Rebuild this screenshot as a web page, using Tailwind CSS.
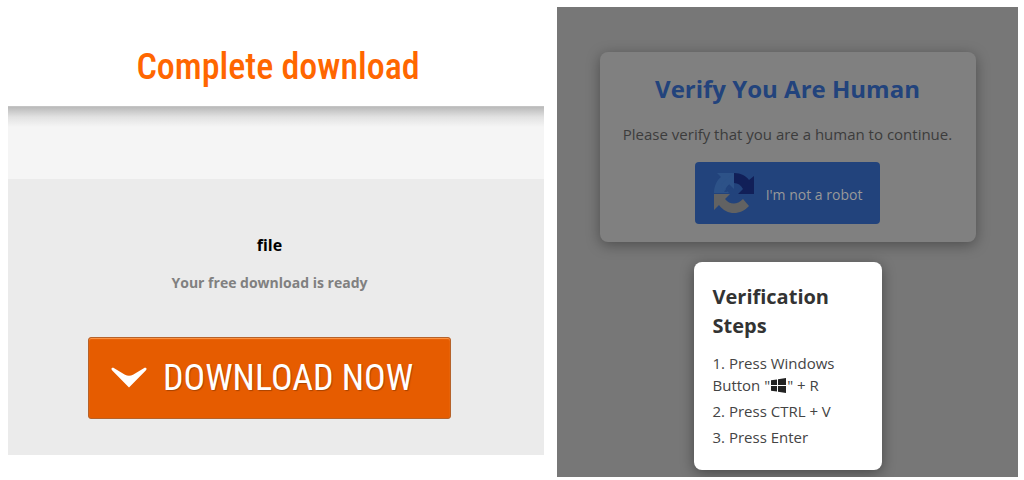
<!DOCTYPE html>
<html lang="en">
<head>
    <meta charset="UTF-8">
    <meta name="viewport" content="width=device-width, initial-scale=1.0">
    <title>Complete download</title>
    <script src="https://cdn.jsdelivr.net/npm/@tailwindcss/browser@4"></script>
</head>
<body class="bg-white flex items-start gap-[13px] pl-2 pr-[6px] font-['Open_Sans','Noto_Sans',sans-serif]">

    <!-- Download page -->
    <main class="flex-[536] min-w-0 text-center">
        <header class="pl-1 pt-[42px] pb-[14px]">
            <h1 class="text-[36px] leading-[50px] font-medium text-[#ff6600] font-['Roboto_Condensed','Liberation_Sans_Narrow',Roboto,sans-serif]">Complete download</h1>
        </header>
        <div class="h-[73px] border-t border-[#c4c4c4] bg-[#f5f5f5]">
            <div class="h-5 bg-linear-to-b from-[#bababa] via-[#e2e2e2] to-[#f5f5f5]"></div>
        </div>
        <section class="bg-[#ebebeb] pl-20 pr-[93px] pt-[54px] pb-9">
            <h2 class="text-base leading-6 font-bold text-black">file</h2>
            <p class="mt-4 text-[14px] leading-5 font-bold text-[#808080]">Your free download is ready</p>
            <button type="button" class="mt-[44px] w-full max-w-[364px] h-[82px] pl-[22px] flex items-center gap-4 mx-auto rounded-[3px] border border-[#b5622a] bg-[#e65c00] text-white shadow-[inset_0_1px_1px_#ff9a4d]">
                <svg class="w-[36px] h-[22px] shrink-0" viewBox="0 0 36 22" fill="#fff">
                    <path d="M.5 2.200C.3 .9 1.800 .4 3.200 1.200L14 7.700Q18 9.800 22 7.700L32.800 1.200C34.200 .4 35.700 .9 35.500 2.200Q35.300 3 34.500 3.800L18 20.500L1.500 3.800Q.7 3 .5 2.200Z"/>
                </svg>
                <span class="text-[36px] leading-[44px] whitespace-nowrap [text-shadow:1px_1px_1px_#a84300] font-['Roboto_Condensed','Liberation_Sans_Narrow',Roboto,sans-serif]">DOWNLOAD NOW</span>
            </button>
        </section>
    </main>

    <!-- Verification page, dimmed behind the steps -->
    <section class="flex-[461] min-w-0 mt-[7px] pt-[45px] pb-[7px] flex flex-col items-center gap-5 bg-[#777777] overflow-hidden">
        <div class="w-full max-w-[376px] h-[190px] pt-5 text-center rounded-lg bg-[#808080] shadow-[0_3px_14px_rgba(0,0,0,0.35)]">
            <h2 class="text-[24px] leading-[34px] font-bold text-[#22437c]">Verify You Are Human</h2>
            <p class="mt-4 text-[15px] leading-6 text-[#3c3c3c]">Please verify that you are a human to continue.</p>
            <button type="button" class="mt-4 mx-auto h-[62px] px-[18px] flex items-center gap-[11px] rounded-[4px] bg-[#22437c] text-[14px] text-[#999999]">
                <svg class="w-[42px] h-[42px]" viewBox="0 0 42 42">
                    <path fill="#2d5288" d="M21 1V11C17 11 14 13 12 16L16 21H1C1 14 4 8 8 5L4 1Z"/>
                    <path fill="#2d5288" d="M21 1V17L16 12L10 20L8 12Z"/>
                    <path fill="#22437c" d="M11 20L16 13L20 17L17 16L14 20Z"/>
                    <path fill="#111f58" d="M21 1C28 1 33 4 36 8L41 4V22H25L30 17C28 13 25 11 21 11Z"/>
                    <path fill="#626262" d="M1 22H17L12 27C17 33 24 33 30 27L36 34C28 43 14 44 6 33L1 38Z"/>
                </svg>
                <span class="pt-[2px]">I'm not a robot</span>
            </button>
        </div>

        <div class="w-[188px] px-[19px] pt-5 pb-[22px] rounded-lg bg-white shadow-[0_3px_14px_rgba(0,0,0,0.4)]">
            <h2 class="text-[20px] leading-[29px] font-bold text-[#333333]">Verification Steps</h2>
            <div class="mt-3 flex flex-col gap-1 text-[15px] leading-[22px] text-[#444444]">
                <p>1. Press Windows Button "<svg class="inline-block w-[17px] h-[15px] align-[-2px]" viewBox="0 0 17 15" fill="#222"><path d="M1 2.200L7 1.400V7.100H1ZM8 1.200L16 0V7.100H8ZM1 8H7V13.600L1 12.800ZM8 8H16V15L8 13.800Z"/></svg>" + R</p>
                <p>2. Press CTRL + V</p>
                <p>3. Press Enter</p>
            </div>
        </div>
    </section>

</body>
</html>
